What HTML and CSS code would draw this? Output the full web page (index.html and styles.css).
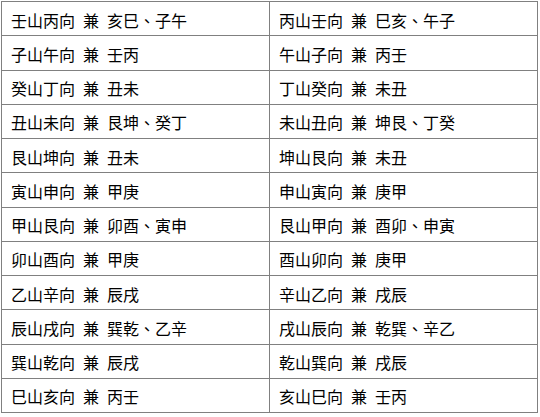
FILE: index.html
```html
<!DOCTYPE html>
<html>
<head>
<meta charset="utf-8">
<link rel="stylesheet" href="styles.css">
</head>
<body>
<table class="grid">
<tr><td>壬山丙向 兼 亥巳、子午</td><td>丙山壬向 兼 巳亥、午子</td></tr>
<tr><td>子山午向 兼 壬丙</td><td>午山子向 兼 丙壬</td></tr>
<tr><td>癸山丁向 兼 丑未</td><td>丁山癸向 兼 未丑</td></tr>
<tr><td>丑山未向 兼 艮坤、癸丁</td><td>未山丑向 兼 坤艮、丁癸</td></tr>
<tr><td>艮山坤向 兼 丑未</td><td>坤山艮向 兼 未丑</td></tr>
<tr><td>寅山申向 兼 甲庚</td><td>申山寅向 兼 庚甲</td></tr>
<tr><td>甲山艮向 兼 卯酉、寅申</td><td>艮山甲向 兼 酉卯、申寅</td></tr>
<tr><td>卯山酉向 兼 甲庚</td><td>酉山卯向 兼 庚甲</td></tr>
<tr><td>乙山辛向 兼 辰戌</td><td>辛山乙向 兼 戌辰</td></tr>
<tr><td>辰山戌向 兼 巽乾、乙辛</td><td>戌山辰向 兼 乾巽、辛乙</td></tr>
<tr><td>巽山乾向 兼 辰戌</td><td>乾山巽向 兼 戌辰</td></tr>
<tr><td>巳山亥向 兼 丙壬</td><td>亥山巳向 兼 壬丙</td></tr>
</table>
</body>
</html>
```
FILE: styles.css
```css
html, body {
  margin: 0;
  padding: 0;
  background: #ffffff;
}
body {
  padding: 1px 0 0 1px;
}
.grid {
  border-collapse: collapse;
  width: 537px;
  height: 412px;
  font-family: "Noto Sans CJK TC", "Noto Sans CJK SC", sans-serif;
  font-size: 16px;
  color: #000000;
  word-spacing: 4.4px;
}
.grid td {
  border: 1px solid #808080;
  width: 50%;
  padding: 2px 8px 0 9px;
  line-height: 20px;
  white-space: nowrap;
  vertical-align: middle;
}
```
